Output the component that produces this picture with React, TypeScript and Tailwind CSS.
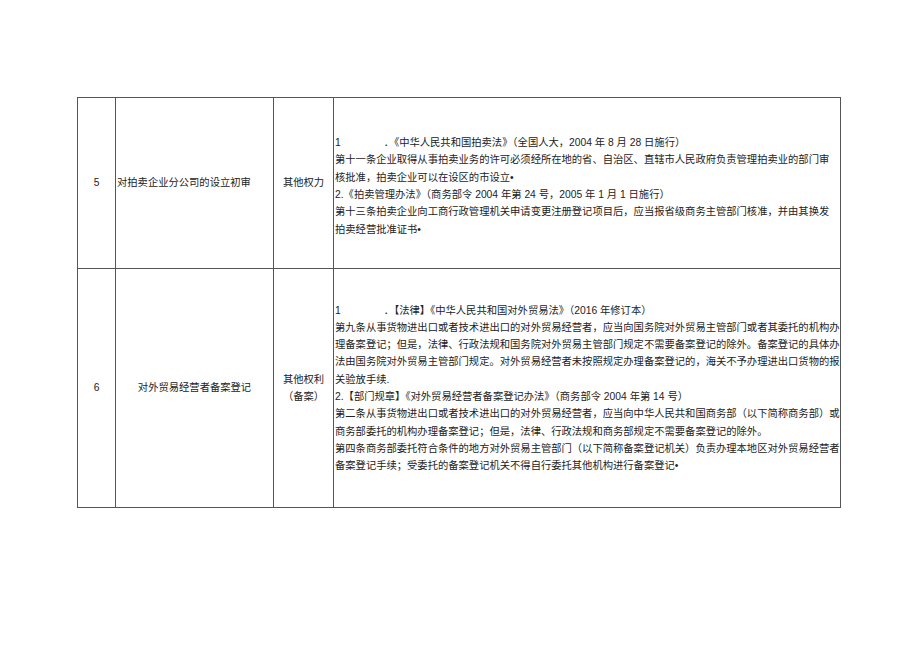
export default function App() {
  const font = { fontFamily: '"Liberation Sans", "Noto Sans CJK SC", sans-serif' };
  const L = ({ children }: { children: React.ReactNode }) => (
    <div className="whitespace-nowrap h-[17.3px] leading-[17.3px]">{children}</div>
  );
  return (
    <div className="w-[920px] h-[651px] bg-white text-[#222] text-[10.3px]" style={font}>
      <div className="pt-[97px] pl-[77px]">
        <table className="border-collapse table-fixed w-[763px]">
          <colgroup>
            <col className="w-[38px]" />
            <col className="w-[158px]" />
            <col className="w-[60px]" />
            <col className="w-[507px]" />
          </colgroup>
          <tbody>
            <tr className="h-[171px]">
              <td className="border border-[#555] text-center align-middle">5</td>
              <td className="border border-[#555] text-left align-middle pl-px">对拍卖企业分公司的设立初审</td>
              <td className="border border-[#555] text-center align-middle">其他权力</td>
              <td className="border border-[#555] align-middle pl-px pt-[6px]">
                <L>1<span className="inline-block w-[43px]"></span>．《中华人民共和国拍卖法》（全国人大，2004 年 8 月 28 日施行）</L>
                <L>第十一条企业取得从事拍卖业务的许可必须经所在地的省、自治区、直辖市人民政府负责管理拍卖业的部门审</L>
                <L>核批准，拍卖企业可以在设区的市设立•</L>
                <L>2.《拍卖管理办法》（商务部令 2004 年第 24 号，2005 年 1 月 1 日施行）</L>
                <L>第十三条拍卖企业向工商行政管理机关申请变更注册登记项目后，应当报省级商务主管部门核准，并由其换发</L>
                <L>拍卖经营批准证书•</L>
              </td>
            </tr>
            <tr className="h-[239px]">
              <td className="border border-[#555] text-center align-middle">6</td>
              <td className="border border-[#555] text-center align-middle">对外贸易经营者备案登记</td>
              <td className="border border-[#555] text-center align-middle leading-[17.3px]">
                <div>其他权利</div>
                <div>（备案）</div>
              </td>
              <td className="border border-[#555] align-middle pl-px">
                <L>1<span className="inline-block w-[43px]"></span>．【法律】《中华人民共和国对外贸易法》（2016 年修订本）</L>
                <L>第九条从事货物进出口或者技术进出口的对外贸易经营者，应当向国务院对外贸易主管部门或者其委托的机构办</L>
                <L>理备案登记；但是，法律、行政法规和国务院对外贸易主管部门规定不需要备案登记的除外。备案登记的具体办</L>
                <L>法由国务院对外贸易主管部门规定。对外贸易经营者未按照规定办理备案登记的，海关不予办理进出口货物的报</L>
                <L>关验放手续.</L>
                <L>2.【部门规章】《对外贸易经营者备案登记办法》（商务部令 2004 年第 14 号）</L>
                <L>第二条从事货物进出口或者技术进出口的对外贸易经营者，应当向中华人民共和国商务部（以下简称商务部）或</L>
                <L>商务部委托的机构办理备案登记；但是，法律、行政法规和商务部规定不需要备案登记的除外。</L>
                <L>第四条商务部委托符合条件的地方对外贸易主管部门（以下简称备案登记机关）负责办理本地区对外贸易经营者</L>
                <L>备案登记手续；受委托的备案登记机关不得自行委托其他机构进行备案登记•</L>
              </td>
            </tr>
          </tbody>
        </table>
      </div>
    </div>
  );
}
